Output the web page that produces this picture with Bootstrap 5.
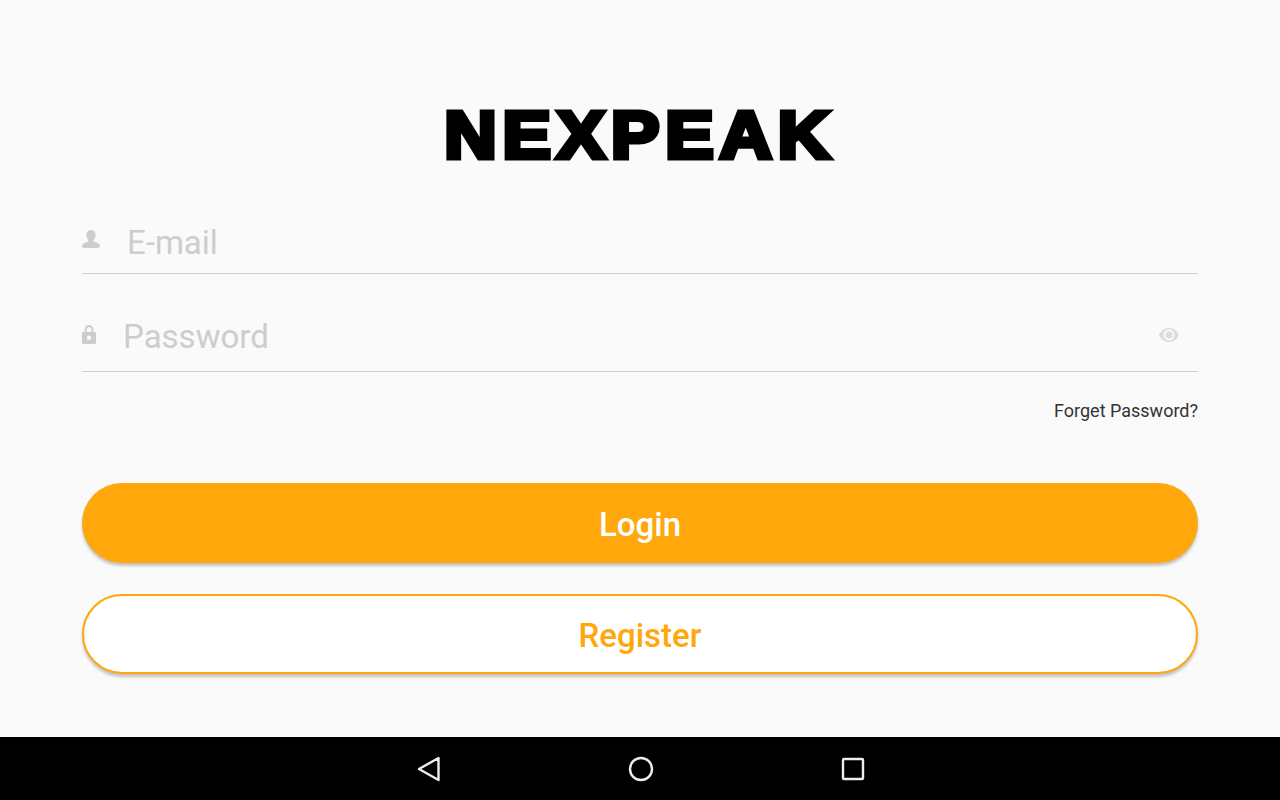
<!DOCTYPE html>
<html lang="en">
<head>
<meta charset="utf-8">
<title>Login</title>
<link rel="stylesheet" href="https://cdn.jsdelivr.net/npm/bootstrap@5.3.0/dist/css/bootstrap.min.css">
<style>
html,body{height:800px;overflow:hidden}
body{font-family:Roboto,"Liberation Sans",sans-serif;background:#fafafa}
.app-main{height:737px;padding:0 82px;background:#fafafa}
.logo-wrap{height:199px;padding-top:99px;line-height:1}
.logo-text{display:inline-block;font-family:"Liberation Sans",sans-serif;font-weight:700;font-size:66px;line-height:72px;letter-spacing:5.3px;color:#000;-webkit-text-stroke:5px #000;transform:scaleX(1.1)}
.field-row{border-bottom:1px solid #cfcfcf;color:#cdcdcd;font-size:33px;line-height:38px}
.field-mail{height:75px;padding-top:25px}
.field-pass{height:98px;padding-top:44px}
.field-icon{flex:none;fill:#cdcdcd}
.icon-user{margin-right:27px;margin-top:6px}
.icon-lock{margin-right:27px;margin-top:7px}
.icon-eye{margin-right:19px;margin-top:10px}
.forgot{color:#333;font-size:18px;line-height:22px;margin-top:28px;margin-bottom:61px;text-decoration:none}
.btn-pill{height:80px;width:100%;border-radius:40px;font-size:33px;font-weight:500;line-height:38px;padding:4px 0 0;box-shadow:0 3px 3px rgba(0,0,0,.22)}
.btn-pill:hover,.btn-pill:active{box-shadow:0 3px 3px rgba(0,0,0,.22)}
.btn-login,.btn-login:hover{background:#ffa70b;border:0;color:#fff}
.btn-reg,.btn-reg:hover{background:#fff;border:2px solid #ffa70b;color:#ffa70b;margin-top:31px}
.sys-bar{height:63px;background:#000;padding-left:1px}
.sys-slot{width:212px}
</style>
</head>
<body>
<main class="app-main d-flex flex-column">
  <div class="logo-wrap text-center"><span class="logo-text">NEXPEAK</span></div>
  <div class="field-row field-mail d-flex align-items-start">
    <svg class="field-icon icon-user" width="18" height="20" viewBox="0 0 18 20"><path d="M9 0c3 0 4.600 2.200 4.600 5.200 0 2.200-1 4-2.200 5 0 .9.300 1.400 1.400 1.800 2.600.8 5.200 1.800 5.200 4.200 0 1.500-2 1.800-9 1.800s-9-.3-9-1.800c0-2.400 2.600-3.400 5.200-4.200 1.100-.4 1.400-.9 1.400-1.800-1.200-1-2.200-2.800-2.200-5C4.400 2.200 6 0 9 0z"/></svg>
    <span>E-mail</span>
  </div>
  <div class="field-row field-pass d-flex align-items-start">
    <svg class="field-icon icon-lock" width="14" height="19" viewBox="0 0 14 19"><path fill-rule="evenodd" d="M7 0c2.600 0 4.300 1.900 4.300 4.400V7H13c.6 0 1 .4 1 1v10c0 .6-.4 1-1 1H1c-.6 0-1-.4-1-1V8c0-.6.4-1 1-1h1.700V4.400C2.700 1.900 4.400 0 7 0zm0 2C5.500 2 4.700 3 4.700 4.500V7h4.600V4.500C9.300 3 8.500 2 7 2zm0 8.500a2.200 2.200 0 1 0 0 4.400 2.200 2.200 0 0 0 0-4.400z"/></svg>
    <span class="flex-grow-1">Password</span>
    <svg class="field-icon icon-eye" width="20" height="14" viewBox="0 0 20 14" style="fill:#dcdcdc"><path fill-rule="evenodd" d="M10 0c4.600 0 8.300 3 10 7-1.700 4-5.400 7-10 7S1.700 11 0 7c1.700-4 5.400-7 10-7zm0 1.500C7 1.500 4.500 4 4.500 7s2.500 5.500 5.500 5.500 5.500-2.500 5.500-5.500S13 1.500 10 1.500zM10 3.500a3.500 3.500 0 1 1 0 7 3.500 3.500 0 0 1 0-7z"/></svg>
  </div>
  <div class="text-end"><a href="#" class="forgot d-inline-block">Forget Password?</a></div>
  <button type="button" class="btn btn-pill btn-login">Login</button>
  <button type="button" class="btn btn-pill btn-reg">Register</button>
</main>
<nav class="sys-bar d-flex justify-content-center align-items-center">
  <div class="sys-slot d-flex justify-content-center">
    <svg width="24" height="26" viewBox="0 0 24 26" fill="none" stroke="#eee" stroke-width="2.400" stroke-linejoin="round"><path d="M21.500 2v22L2 13z"/></svg>
  </div>
  <div class="sys-slot d-flex justify-content-center">
    <svg width="26" height="26" viewBox="0 0 26 26" fill="none" stroke="#eee" stroke-width="2.400"><circle cx="13" cy="13" r="11"/></svg>
  </div>
  <div class="sys-slot d-flex justify-content-center">
    <svg width="24" height="24" viewBox="0 0 24 24" fill="none" stroke="#eee" stroke-width="2.400" stroke-linejoin="round"><rect x="2" y="2" width="20" height="20" rx="1"/></svg>
  </div>
</nav>
<script src="https://cdn.jsdelivr.net/npm/bootstrap@5.3.0/dist/js/bootstrap.bundle.min.js"></script>
</body>
</html>
